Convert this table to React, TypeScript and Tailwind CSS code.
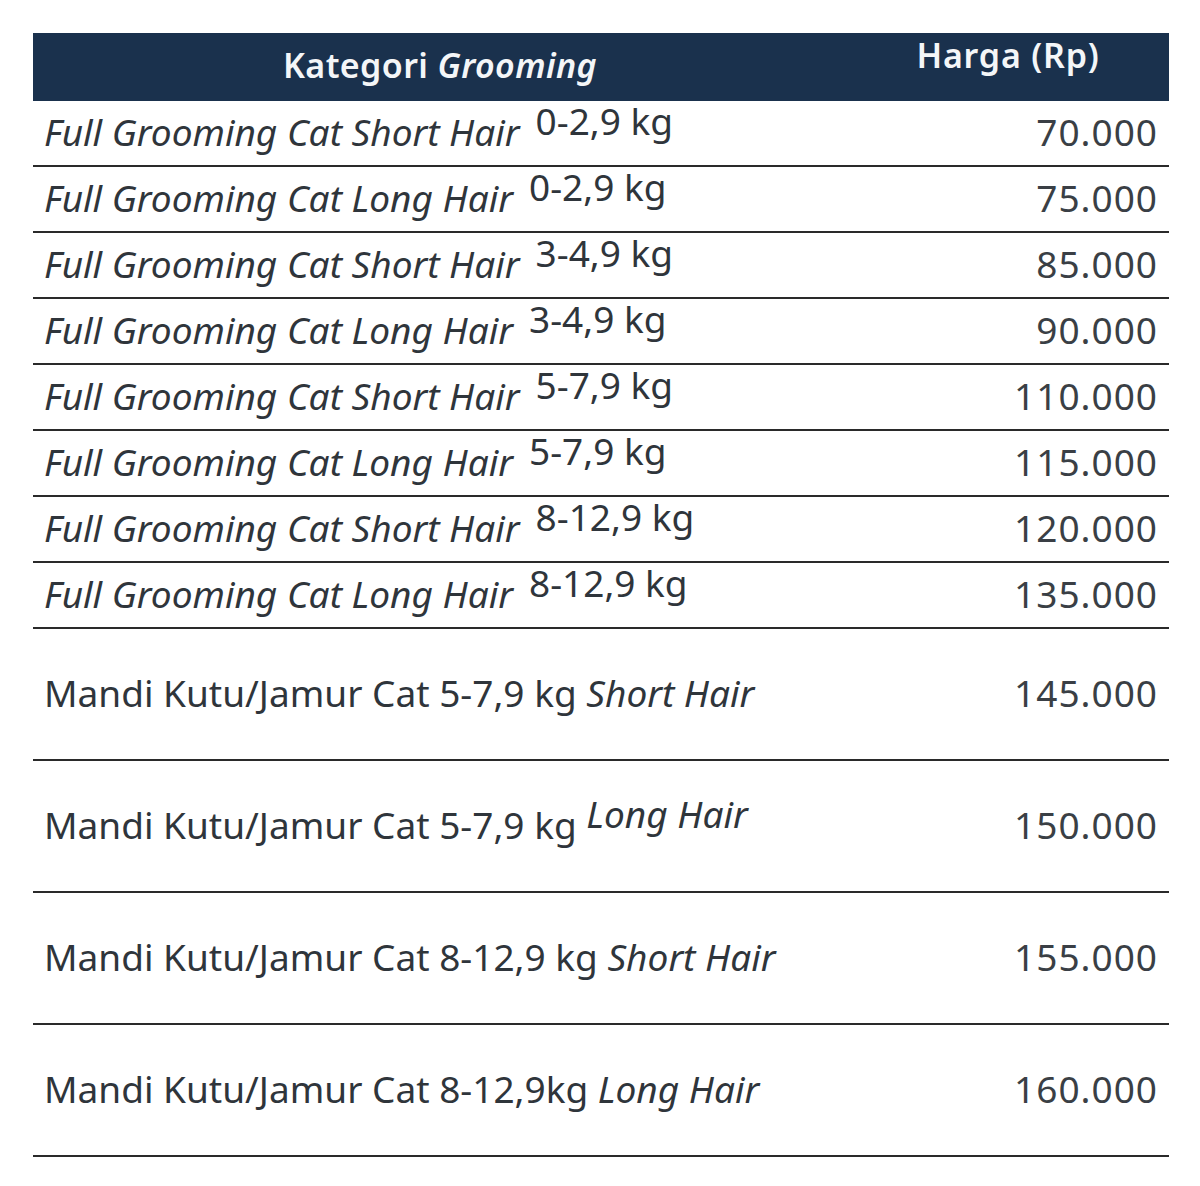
import React from "react";

type Row = {
  name: React.ReactNode;
  price: string;
  tall?: boolean;
};

const sup = (t: string) => (
  <span className="relative -top-[11px] not-italic ml-[16px]">{t}</span>
);

const fg = (hair: string, w: string) => (
  <>
    <span className="italic">Full Grooming Cat {hair} Hair</span>
    {sup(w)}
  </>
);

const rows: Row[] = [
  { name: fg("Short", "0-2,9 kg"), price: "70.000" },
  { name: fg("Long", "0-2,9 kg"), price: "75.000" },
  { name: fg("Short", "3-4,9 kg"), price: "85.000" },
  { name: fg("Long", "3-4,9 kg"), price: "90.000" },
  { name: fg("Short", "5-7,9 kg"), price: "110.000" },
  { name: fg("Long", "5-7,9 kg"), price: "115.000" },
  { name: fg("Short", "8-12,9 kg"), price: "120.000" },
  { name: fg("Long", "8-12,9 kg"), price: "135.000" },
  {
    name: (
      <>
        Mandi Kutu/Jamur Cat 5-7,9 kg <span className="italic">Short Hair</span>
      </>
    ),
    price: "145.000",
    tall: true,
  },
  {
    name: (
      <>
        Mandi Kutu/Jamur Cat 5-7,9 kg{" "}
        <span className="italic relative -top-[11px]">Long Hair</span>
      </>
    ),
    price: "150.000",
    tall: true,
  },
  {
    name: (
      <>
        Mandi Kutu/Jamur Cat 8-12,9 kg <span className="italic">Short Hair</span>
      </>
    ),
    price: "155.000",
    tall: true,
  },
  {
    name: (
      <>
        Mandi Kutu/Jamur Cat 8-12,9kg <span className="italic">Long Hair</span>
      </>
    ),
    price: "160.000",
    tall: true,
  },
];

export default function App() {
  return (
    <div className="w-[1200px] h-[1186px] bg-white pt-[33px] pl-[33px] font-['Noto_Sans',sans-serif]">
      <div className="w-[1136px]">
        {/* header */}
        <div className="flex h-[68px] bg-[#1a314d] text-[#f4f6f8] font-semibold text-[34px] leading-none">
          <div className="w-[814px] flex items-end justify-center pb-[19px] tracking-[0.4px]">
            <span>
              Kategori <span className="italic">Grooming</span>
            </span>
          </div>
          <div className="flex-1 flex items-start justify-center pt-[5px] tracking-[0.8px]">
            Harga (Rp)
          </div>
        </div>

        {rows.map((r, i) => (
          <div
            key={i}
            className={`flex items-center border-b-2 border-[#2a2a2a] text-[#2f353b] text-[37px] leading-none ${
              r.tall ? "h-[132px]" : "h-[66px]"
            }`}
          >
            <div className="flex-1 pl-[11px] pb-[4px] whitespace-nowrap">{r.name}</div>
            <div className="pr-[11px] pb-[4px] text-[#3a3f45] tracking-[1px]">{r.price}</div>
          </div>
        ))}
      </div>
    </div>
  );
}
